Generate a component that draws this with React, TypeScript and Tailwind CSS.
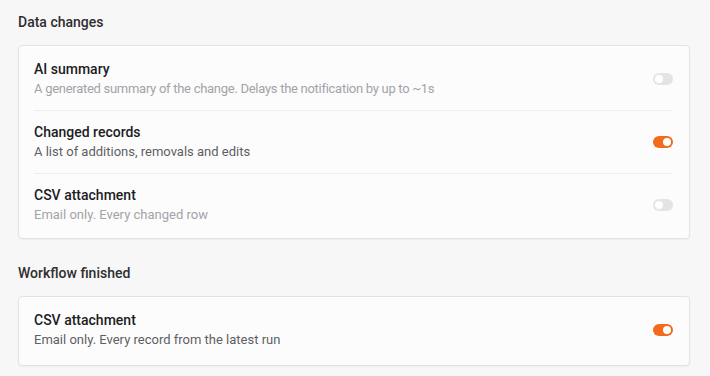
import React, { useState } from 'react';

type Item = { id: string; title: string; desc: string; on: boolean; tight?: boolean };

const SECTIONS: { title: string; items: Item[] }[] = [
  {
    title: 'Data changes',
    items: [
      { id: 'ai', title: 'AI summary', desc: 'A generated summary of the change. Delays the notification by up to ~1s', on: false, tight: true },
      { id: 'records', title: 'Changed records', desc: 'A list of additions, removals and edits', on: true },
      { id: 'csv', title: 'CSV attachment', desc: 'Email only. Every changed row', on: false },
    ],
  },
  {
    title: 'Workflow finished',
    items: [
      { id: 'csv-run', title: 'CSV attachment', desc: 'Email only. Every record from the latest run', on: true },
    ],
  },
];

const Toggle: React.FC<{ on: boolean; onClick: () => void }> = ({ on, onClick }) => (
  <button
    onClick={onClick}
    className={`relative w-[20px] h-[12px] rounded-full flex-shrink-0 transition-colors ${on ? 'bg-[#f26a1c]' : 'bg-[#e4e4e6]'}`}
  >
    <span
      className={`absolute top-[2px] w-[8px] h-[8px] rounded-full bg-white transition-all ${on ? 'left-[10px]' : 'left-[2px]'}`}
    ></span>
  </button>
);

const App: React.FC = () => {
  const [state, setState] = useState<Record<string, boolean>>(() => {
    const s: Record<string, boolean> = {};
    SECTIONS.forEach(sec => sec.items.forEach(i => { s[i.id] = i.on; }));
    return s;
  });

  return (
    <div className="min-h-screen bg-[#f7f7f8] pl-[18px] pr-[20px] pt-[12px] text-[14px]" style={{ fontFamily: 'Roboto, "Noto Sans", sans-serif' }}>
      {SECTIONS.map((sec, si) => (
        <section key={sec.title} className={si > 0 ? 'mt-[24px]' : ''}>
          <h2 className="text-[14px] leading-[20px] font-medium text-[#2e2e30] mb-[13px]">{sec.title}</h2>
          <div className={`bg-[#fcfcfd] border border-[#e3e3e5] rounded-[4px] shadow-[0_1px_2px_rgba(0,0,0,0.04)] ${si > 0 ? 'pt-[2px] pb-[4px]' : 'py-[2px]'}`}>
            {sec.items.map((item, i) => (
              <div
                key={item.id}
                className={`ml-[15px] mr-[16px] py-[11px] flex items-center justify-between ${i > 0 ? 'border-t border-[#eeeef0]' : ''}`}
              >
                <div>
                  <div className="text-[14px] leading-[20px] font-medium text-[#1d1d1f]">{item.title}</div>
                  <div className={`text-[13px] leading-[20px] ${item.tight ? 'tracking-[-0.28px]' : ''} ${state[item.id] ? 'text-[#5f5f63]' : 'text-[#a3a3a7]'}`}>{item.desc}</div>
                </div>
                <Toggle on={state[item.id]} onClick={() => setState(s => ({ ...s, [item.id]: !s[item.id] }))} />
              </div>
            ))}
          </div>
        </section>
      ))}
    </div>
  );
};

export default App;
